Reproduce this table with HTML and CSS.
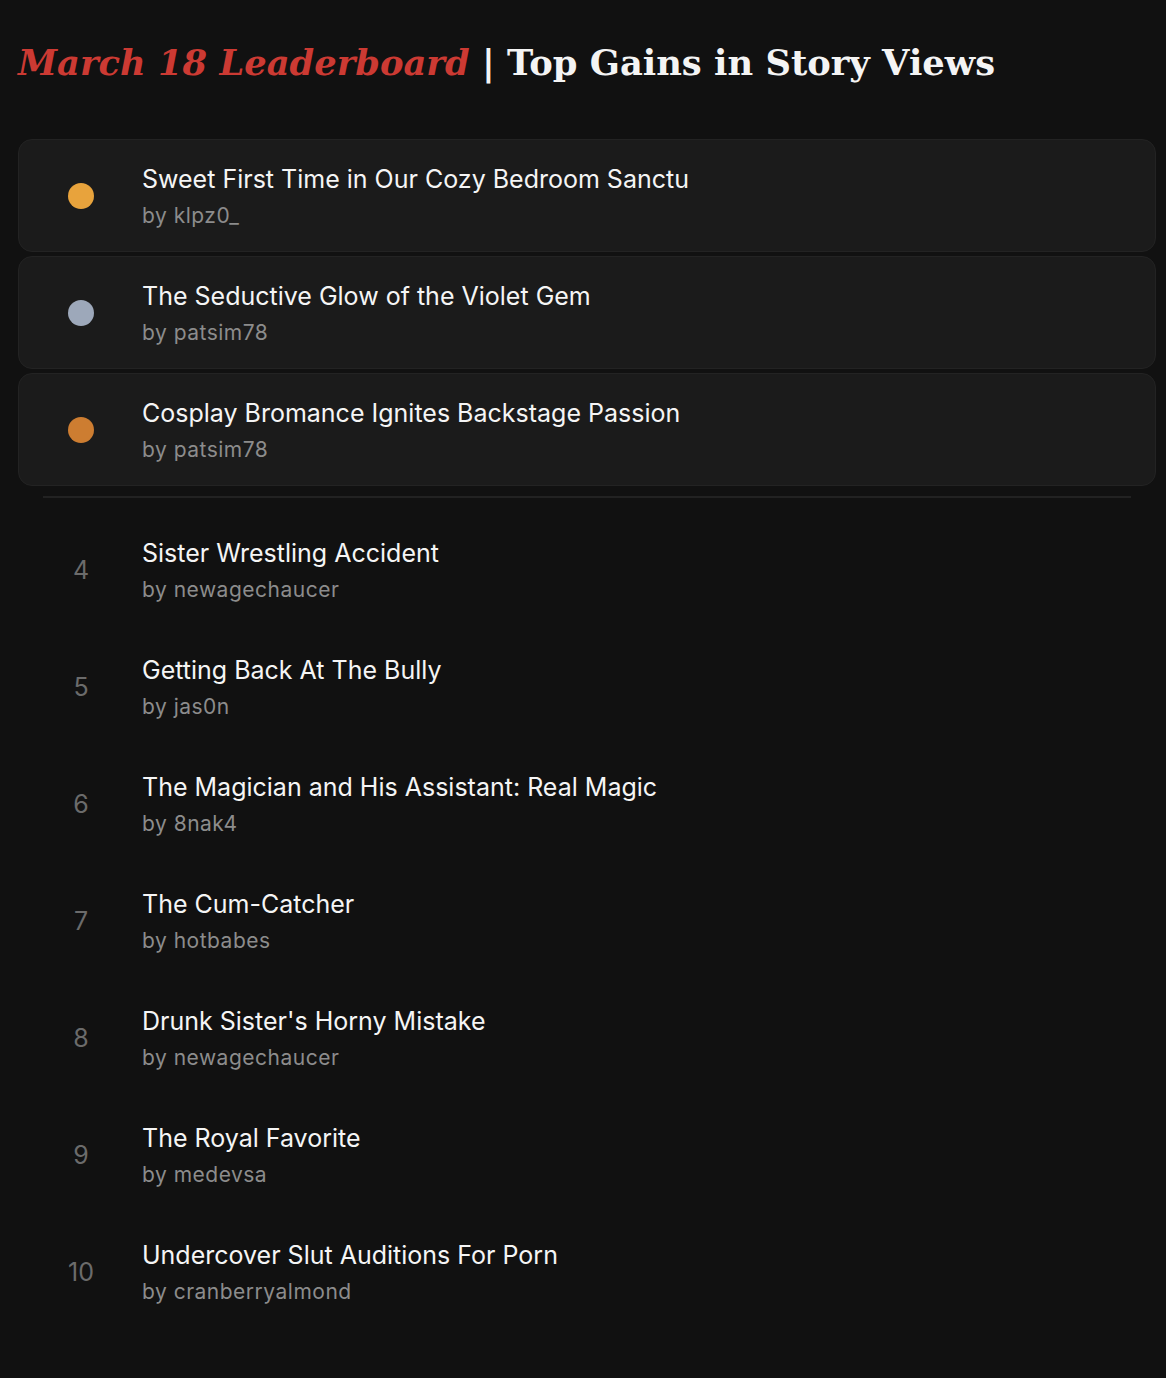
FILE: index.html
```html
<!DOCTYPE html>
<html lang="en">
<head>
    <meta charset="UTF-8">
    <meta name="viewport" content="width=device-width, initial-scale=1.0">
    <title>March 18 Leaderboard</title>
    <link rel="stylesheet" href="styles.css">
</head>
<body>
    <h1 class="board-title"><span class="board-date">March 18 Leaderboard</span> | Top Gains in Story Views</h1>

    <div class="podium">
        <div class="entry card">
            <div class="rank"><span class="medal gold"></span></div>
            <div class="info">
                <div class="story">Sweet First Time in Our Cozy Bedroom Sanctu</div>
                <div class="author">by klpz0_</div>
            </div>
        </div>
        <div class="entry card">
            <div class="rank"><span class="medal silver"></span></div>
            <div class="info">
                <div class="story">The Seductive Glow of the Violet Gem</div>
                <div class="author">by patsim78</div>
            </div>
        </div>
        <div class="entry card">
            <div class="rank"><span class="medal bronze"></span></div>
            <div class="info">
                <div class="story">Cosplay Bromance Ignites Backstage Passion</div>
                <div class="author">by patsim78</div>
            </div>
        </div>
    </div>

    <hr class="divider">

    <div class="rest">
        <div class="entry">
            <div class="rank">4</div>
            <div class="info">
                <div class="story">Sister Wrestling Accident</div>
                <div class="author">by newagechaucer</div>
            </div>
        </div>
        <div class="entry">
            <div class="rank">5</div>
            <div class="info">
                <div class="story">Getting Back At The Bully</div>
                <div class="author">by jas0n</div>
            </div>
        </div>
        <div class="entry">
            <div class="rank">6</div>
            <div class="info">
                <div class="story">The Magician and His Assistant: Real Magic</div>
                <div class="author">by 8nak4</div>
            </div>
        </div>
        <div class="entry">
            <div class="rank">7</div>
            <div class="info">
                <div class="story">The Cum-Catcher</div>
                <div class="author">by hotbabes</div>
            </div>
        </div>
        <div class="entry">
            <div class="rank">8</div>
            <div class="info">
                <div class="story">Drunk Sister's Horny Mistake</div>
                <div class="author">by newagechaucer</div>
            </div>
        </div>
        <div class="entry">
            <div class="rank">9</div>
            <div class="info">
                <div class="story">The Royal Favorite</div>
                <div class="author">by medevsa</div>
            </div>
        </div>
        <div class="entry">
            <div class="rank">10</div>
            <div class="info">
                <div class="story">Undercover Slut Auditions For Porn</div>
                <div class="author">by cranberryalmond</div>
            </div>
        </div>
    </div>
</body>
</html>
```

FILE: styles.css
```css
body {
    margin: 0;
    padding: 0 10px 0 18px;
    background-color: #111111;
    color: #f2f2f2;
    font-family: Inter, "Noto Sans", sans-serif;
}
.board-title {
    margin: 0;
    padding: 39px 0 52px;
    font-family: "DejaVu Serif", "Liberation Serif", serif;
    font-size: 35.3px;
    font-weight: bold;
    line-height: 48px;
    color: #f4f4f4;
    white-space: nowrap;
}
.board-date {
    color: #cc3a33;
    font-style: italic;
}
.podium, .rest {
    display: flex;
    flex-direction: column;
    gap: 4px;
}
.entry {
    display: flex;
    align-items: center;
    height: 113px;
    box-sizing: border-box;
    padding: 0 24px;
    border: 1px solid transparent;
    border-radius: 14px;
}
.card {
    background-color: #1b1b1b;
    border-color: #232323;
}
.rank {
    width: 76px;
    flex-shrink: 0;
    margin-right: 23px;
    display: flex;
    justify-content: center;
    align-items: center;
    font-size: 25px;
    color: #6b6b6b;
}
.medal {
    width: 26px;
    height: 26px;
    border-radius: 50%;
}
.gold {
    background-color: #e8a33c;
}
.silver {
    background-color: #9da8ba;
}
.bronze {
    background-color: #cd7d31;
}
.info {
    display: flex;
    flex-direction: column;
    gap: 6px;
    margin-top: 2px;
}
.story {
    font-size: 25px;
    line-height: 32px;
    color: #f5f5f5;
}
.author {
    font-size: 21px;
    line-height: 30px;
    letter-spacing: 0.5px;
    color: #8c8c8c;
}
.divider {
    border: none;
    border-top: 2px solid #222222;
    margin: 10px 25px 15px;
}
```
